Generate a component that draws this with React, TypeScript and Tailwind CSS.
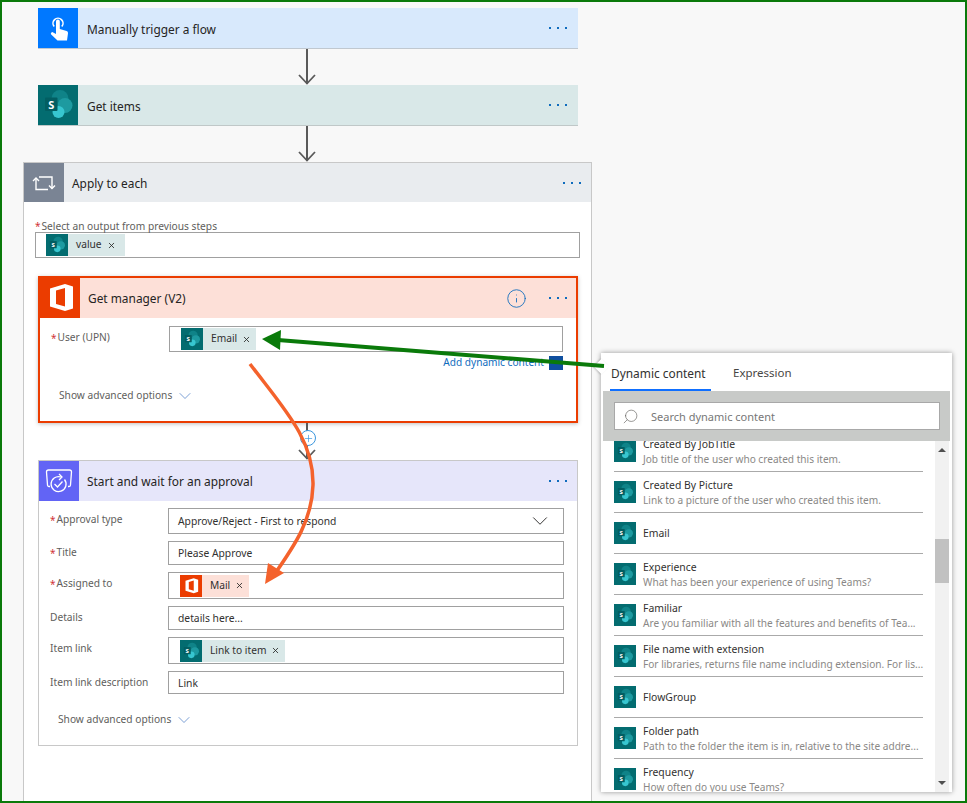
import React from "react";
import { ChevronDown, Info, Search, Plus, X } from "lucide-react";

const SharePoint = ({ size = 22 }: { size?: number }) => (
  <svg width={size} height={size} viewBox="0 0 40 40" className="shrink-0 block">
    <rect width="40" height="40" fill="#036c70" />
    <circle cx="22" cy="13.5" r="8.5" fill="#0f8388" />
    <circle cx="27" cy="20.5" r="7.5" fill="#1d9aa0" />
    <circle cx="20.5" cy="27" r="6" fill="#37c6d0" />
    <rect x="7" y="12.5" width="12.5" height="13.5" rx="1" fill="#025e62" />
    <text x="13.2" y="23.5" textAnchor="middle" fontSize="11" fontWeight="700" fill="#fff" fontFamily="Noto Sans, sans-serif">S</text>
  </svg>
);

const Office = ({ size = 22 }: { size?: number }) => (
  <svg width={size} height={size} viewBox="0 0 40 40" className="shrink-0 block">
    <rect width="40" height="40" fill="#eb3c00" />
    <path fillRule="evenodd" fill="#fff" d="M10 28.5V10.5L25 6l8 2.5v22L25 33ZM25 10l-9 2.5V26l9 2.5Z" />
  </svg>
);

const Hand = () => (
  <svg width="40" height="40" viewBox="0 0 40 40" className="shrink-0 block">
    <rect width="40" height="40" fill="#0078ff" />
    <path d="M16.2 18.5a5 5 0 1 1 7.6 0" fill="none" stroke="#fff" strokeWidth="1.6" />
    <path fill="#fff" d="M18 13.5a1.9 1.9 0 0 1 3.8 0V21l6.8 2a2 2 0 0 1 1.4 2.2L29 32.5H19.5L13.2 26.6a1.5 1.5 0 0 1 2-2.2L18 26Z" />
  </svg>
);

const Loop = () => (
  <svg width="40" height="39" viewBox="0 0 40 39" className="shrink-0 block">
    <rect width="40" height="39" fill="#7a8494" />
    <g fill="none" stroke="#fff" strokeWidth="1.4">
      <path d="M12 15v11.5h12" />
      <path d="M9 18 12 15l3 3" />
      <path d="M15 14h13v11.5" />
      <path d="M25 22.5 28 25.5 31 22.5" />
    </g>
  </svg>
);

const Approval = () => (
  <svg width="40" height="40" viewBox="0 0 40 40" className="shrink-0 block">
    <rect width="40" height="40" fill="#6264f5" />
    <g fill="none" stroke="#fff" strokeWidth="1.3">
      <path d="M11 25.5H10a1.5 1.5 0 0 1-1.5-1.5L7.5 11a2 2 0 0 1 2-2h21a2 2 0 0 1 2 2L31.5 24a1.5 1.5 0 0 1-1.5 1.5h-1" />
      <path d="M25.5 18.5a7.5 7.5 0 1 1-3.5-2.5" />
      <path d="M20 13l3 3-3 3" />
      <path d="M15.5 23l3 3 5-5.5" />
    </g>
  </svg>
);

const Dots = () => (
  <div className="flex gap-[6px]">
    <span className="w-[2px] h-[2px] bg-[#0f6cbd]" />
    <span className="w-[2px] h-[2px] bg-[#0f6cbd]" />
    <span className="w-[2px] h-[2px] bg-[#0f6cbd]" />
  </div>
);

const Head = ({ icon, title, bg, h = "h-[40px]", children, x = "ml-[9px]", dots = "mr-[11px]", tp = "pt-[3px]" }: any) => (
  <div className={`flex items-center ${h} ${bg}`}>
    {icon}
    <span className={`${x} ${tp} text-[11.9px] text-[#252423]`}>{title}</span>
    <div className={`ml-auto flex items-center ${dots}`}>
      {children}
      <Dots />
    </div>
  </div>
);

const Connector = ({ h = 36 }: { h?: number }) => (
  <div className="ml-[259px] w-[20px]">
    <svg width="20" height={h} viewBox={`0 0 20 ${h}`} className="block">
      <path d={`M10 0V${h - 1}`} stroke="#5a5a5a" strokeWidth="2" fill="none" />
      <path d={`M2 ${h - 10}l8 8.5 8-8.5`} stroke="#5a5a5a" strokeWidth="1.8" fill="none" />
    </svg>
  </div>
);

const Token = ({ label, kind = "sp", ml = "ml-[11px]", pr = "mr-[5px]" }: { label: string; kind?: string; ml?: string; pr?: string }) => (
  <div className={`${ml} flex items-center h-[22px] ${kind === "sp" ? "bg-[#d9e8e8]" : "bg-[#fde0d8]"}`}>
    {kind === "sp" ? <SharePoint /> : <Office />}
    <span className="ml-[8px] text-[10.2px] text-[#323130]">{label}</span>
    <X size={9} strokeWidth={2.2} className={`ml-[5px] ${pr} text-[#252423]`} />
  </div>
);

const Box = ({ h, w = "w-[396px]", children }: any) => (
  <div className={`${w} ${h} border border-[#a0a0a0] bg-white flex items-center shrink-0`}>{children}</div>
);

const Star = () => <span className="inline-block w-[6.5px] text-[10px] text-[#d13438]">*</span>;

const Field = ({ label, req, h, children }: any) => (
  <div className="flex items-start">
    <div className="w-[118px] h-[22px] pt-[2px] flex items-center text-[10.2px] text-[#605e5c] whitespace-nowrap">
      {req && <Star />}
      {label}
    </div>
    <Box h={h}>{children}</Box>
  </div>
);

const Txt = ({ children }: any) => <span className="ml-[9px] pt-[2px] text-[10.3px] text-[#323130]">{children}</span>;

const Advanced = ({ cls }: { cls: string }) => (
  <div className={`${cls} flex items-center text-[10.2px] text-[#605e5c]`}>
    Show advanced options
    <ChevronDown size={20} strokeWidth={0.8} className="ml-[3px] text-[#3a6fc0]" />
  </div>
);

const rows: [string, string][] = [
  ["Created By JobTitle", "Job title of the user who created this item."],
  ["Created By Picture", "Link to a picture of the user who created this item."],
  ["Email", ""],
  ["Experience", "What has been your experience of using Teams?"],
  ["Familiar", "Are you familiar with all the features and benefits of Tea..."],
  ["File name with extension", "For libraries, returns file name including extension. For lis..."],
  ["FlowGroup", ""],
  ["Folder path", "Path to the folder the item is in, relative to the site addre..."],
  ["Frequency", "How often do you use Teams?"],
];

const Popup = () => (
  <div className="absolute left-[599px] top-[351px] w-[351px] h-[439px] bg-white shadow-[0_0_5px_rgba(0,0,0,0.4)] flex flex-col">
    <div className="absolute -left-[5px] top-[8px] w-[11px] h-[11px] bg-white rotate-45 shadow-[-1px_1px_2px_rgba(0,0,0,0.2)]" />
    <div className="relative h-[38px] flex shrink-0 pl-[9px]">
      <div className="w-[101px] h-[38px] pt-[6px] pl-[1px] border-b-2 border-[#0f6fff] flex items-center text-[11.9px] text-[#323130]">
        Dynamic content
      </div>
      <div className="ml-[22px] h-[38px] pt-[1px] flex items-center text-[11.5px] text-[#484644]">Expression</div>
    </div>
    <div className="relative mx-[2px] h-[50px] shrink-0 bg-[#c8cac8] flex items-center pl-[11px]">
      <div className="w-[326px] h-[28px] bg-white border border-[#a8a8a8] flex items-center">
        <Search size={17} strokeWidth={0.9} className="ml-[7px] -scale-x-100 text-[#605e5c]" />
        <span className="ml-[12px] pt-[3px] text-[11px] text-[#777]">Search dynamic content</span>
      </div>
    </div>
    <div className="flex-1 flex min-h-0">
      <div className="flex-1 overflow-hidden pl-[13px]">
        <div className="-mt-[10px] w-[309px]">
          {rows.map(([t, d]) => (
            <div key={t} className="h-[41px] border-b border-[#aaaaaa] flex items-start">
              <div className="mt-[9px]"><SharePoint /></div>
              <div className={`ml-[7px] flex-1 flex flex-col ${d ? "pt-[6px]" : "h-full justify-center"}`}>
                <div className="text-[10.4px] leading-[15px] text-[#323130] whitespace-nowrap">{t}</div>
                {d && <div className="text-[10.1px] leading-[15px] text-[#8a8886] whitespace-nowrap">{d}</div>}
              </div>
            </div>
          ))}
        </div>
      </div>
      <div className="w-[14px] mr-[3px] bg-[#f1f1f1] flex flex-col items-center">
        <div className="mt-[7px] w-0 h-0 border-x-[4px] border-x-transparent border-b-[4px] border-b-[#505050]" />
        <div className="mt-[87px] w-[14px] h-[44px] bg-[#c1c1c1]" />
        <div className="mt-auto mb-[7px] w-0 h-0 border-x-[4px] border-x-transparent border-t-[4px] border-t-[#505050]" />
      </div>
    </div>
  </div>
);

export default function App() {
  return (
    <div className="relative w-[967px] h-[803px] border-2 border-[#0a7a0a] bg-[#f8f8f8] overflow-hidden flex flex-col font-['Noto_Sans','Liberation_Sans',sans-serif]">
      <div className="ml-[36px] mt-[6px] w-[540px] shrink-0">
        <div className="border-b border-[#c0c8d0]">
          <Head icon={<Hand />} title="Manually trigger a flow" bg="bg-[#d8e9fc]" />
        </div>
        <Connector />
        <div className="border-b border-[#c0c8c8]">
          <Head icon={<SharePoint size={40} />} title="Get items" bg="bg-[#d9e8e8]" />
        </div>
        <Connector />
      </div>

      <div className="ml-[21px] w-[569px] flex-1 border-x border-t border-[#c8c8c8] bg-white min-h-0">
        <Head icon={<Loop />} title="Apply to each" bg="bg-[#e9ecef]" h="h-[39px]" x="ml-[8px]" dots="mr-[10px]" />
        <div className="ml-[11px] mt-[17px] h-[13px] pt-[2px] flex items-center text-[10.2px] text-[#605e5c] whitespace-nowrap">
          <Star />Select an output from previous steps
        </div>
        <div className="ml-[11px]">
          <Box h="h-[26px]" w="w-[545px]"><Token label="value" ml="ml-[10px]" pr="mr-[9px]" /></Box>
        </div>

        <div className="ml-[14px] mt-[18px] w-[540px] h-[147px] border-2 border-[#eb3c00] bg-white shadow-[0_1px_4px_rgba(0,0,0,0.25)]">
          <Head
            icon={<Office size={40} />}
            title="Get manager (V2)"
            bg="bg-[#fde0d8]"
            x="ml-[8px]"
            dots="mr-[9px]"
            tp="pt-[1px]"
          >
            <Info size={21} strokeWidth={1} className="text-[#0f6cbd] mr-[22px]" />
          </Head>
          <div className="mt-[8px] flex items-start">
            <div className="pl-[11px] pt-[2px] w-[129px] h-[22px] flex items-center text-[10.2px] text-[#605e5c]">
              <Star />User (UPN)
            </div>
            <Box h="h-[26px]" w="w-[394px]"><Token label="Email" /></Box>
          </div>
          <div className="flex items-center justify-end mt-[3px] h-[15px] pr-[13px]">
            <span className="text-[10.1px] text-[#0f6cbd]">Add dynamic content</span>
            <div className="ml-[5px] w-[14px] h-[14px] bg-[#0f4f9f]" />
          </div>
          <Advanced cls="ml-[19px] mt-[16px]" />
        </div>

        <div className="relative ml-[14px] w-[540px]">
          <Connector h={37} />
          <div className="absolute left-[262px] top-[7px] w-[16px] h-[16px] rounded-full border border-[#3a96dd] bg-white flex items-center justify-center">
            <Plus size={11} strokeWidth={1.5} className="text-[#3a96dd]" />
          </div>
        </div>

        <div className="ml-[14px] w-[540px] h-[286px] border border-[#c8c8c8] bg-white">
          <Head icon={<Approval />} title="Start and wait for an approval" bg="bg-[#e6e6fa]" x="ml-[8px]" dots="mr-[10px]" tp="pt-[1px]" />
          <div className="pl-[11px] pt-[7px] flex flex-col gap-[7px]">
            <Field label="Approval type" req h="h-[26px]">
              <Txt>Approve/Reject - First to respond</Txt>
              <ChevronDown size={26} strokeWidth={0.9} className="ml-auto mr-[10px] text-[#323130]" />
            </Field>
            <Field label="Title" req h="h-[24px]"><Txt>Please Approve</Txt></Field>
            <Field label="Assigned to" req h="h-[27px]"><Token label="Mail" kind="of" /></Field>
            <Field label="Details" h="h-[24px]"><Txt>details here...</Txt></Field>
            <Field label="Item link" h="h-[27px]"><Token label="Link to item" /></Field>
            <Field label="Item link description" h="h-[23px]"><Txt>Link</Txt></Field>
          </div>
          <Advanced cls="ml-[19px] mt-[16px]" />
        </div>
      </div>

      <Popup />

      <svg width="967" height="803" viewBox="0 0 967 803" className="absolute -left-[2px] -top-[2px] pointer-events-none">
        <path d="M604 366 L278 340" stroke="#0a7a0a" strokeWidth="4" fill="none" />
        <path d="M262 339 L281 330 L280 350 Z" fill="#0a7a0a" />
        <path d="M250 364 C285 410 314 440 313 485 C312 520 295 545 274 575" stroke="#f4622c" strokeWidth="3.5" fill="none" />
        <path d="M265 584 L268 563 L284 573 Z" fill="#f4622c" />
      </svg>
    </div>
  );
}
